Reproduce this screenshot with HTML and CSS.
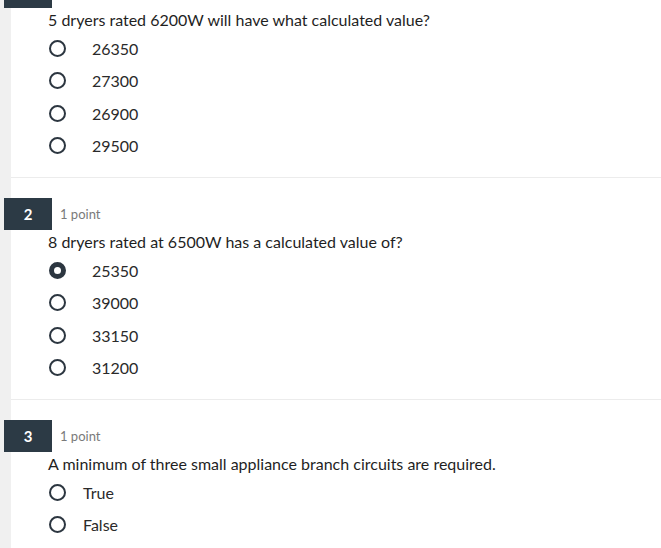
FILE: index.html
```html
<!DOCTYPE html>
<html>
<head>
<meta charset="utf-8">
<link rel="stylesheet" href="styles.css">
</head>
<body>
<div class="page">
  <div class="rail"></div>
  <main class="quiz">
    <section class="question first">
      <div class="q-head"><span class="badge">1</span><span class="points">1 point</span></div>
      <p class="q-text">5 dryers rated 6200W will have what calculated value?</p>
      <ul class="options">
        <li class="option"><span class="radio"></span><span class="opt-text num">26350</span></li>
        <li class="option"><span class="radio"></span><span class="opt-text num">27300</span></li>
        <li class="option"><span class="radio"></span><span class="opt-text num">26900</span></li>
        <li class="option"><span class="radio"></span><span class="opt-text num">29500</span></li>
      </ul>
    </section>
    <section class="question">
      <div class="q-head"><span class="badge">2</span><span class="points">1 point</span></div>
      <p class="q-text">8 dryers rated at 6500W has a calculated value of?</p>
      <ul class="options">
        <li class="option"><span class="radio checked"></span><span class="opt-text num">25350</span></li>
        <li class="option"><span class="radio"></span><span class="opt-text num">39000</span></li>
        <li class="option"><span class="radio"></span><span class="opt-text num">33150</span></li>
        <li class="option"><span class="radio"></span><span class="opt-text num">31200</span></li>
      </ul>
    </section>
    <section class="question">
      <div class="q-head"><span class="badge">3</span><span class="points">1 point</span></div>
      <p class="q-text">A minimum of three small appliance branch circuits are required.</p>
      <ul class="options">
        <li class="option"><span class="radio"></span><span class="opt-text">True</span></li>
        <li class="option"><span class="radio"></span><span class="opt-text">False</span></li>
      </ul>
    </section>
  </main>
</div>
</body>
</html>
```

FILE: styles.css
```css
html, body {
  margin: 0;
  padding: 0;
  background: #ffffff;
  font-family: Lato, "Liberation Sans", sans-serif;
  color: #1f1f1f;
  overflow: hidden;
}

.page {
  display: flex;
  min-height: 548px;
}

.rail {
  width: 11px;
  flex: 0 0 11px;
  background: #f0f0f0;
}

.quiz {
  flex: 1;
  min-width: 0;
}

.question {
  padding: 20px 0 15px 37px;
  border-bottom: 1px solid #ececec;
}

.question.first {
  margin-top: -44px;
}

.q-head {
  display: flex;
  align-items: center;
  gap: 8px;
  height: 32px;
  margin-left: -44px;
}

.badge {
  width: 48px;
  height: 32px;
  display: flex;
  align-items: center;
  justify-content: center;
  background: #2c3a45;
  color: #ffffff;
  font-size: 15px;
  font-weight: 700;
}

.points {
  font-size: 13px;
  color: #7a7a7a;
}

.q-text {
  margin: 2px 0 0;
  font-size: 16px;
  line-height: 20px;
  color: #1f1f1f;
}

.options {
  list-style: none;
  margin: 2px 0 0;
  padding: 0;
}

.option {
  display: flex;
  align-items: center;
  height: 32.5px;
}

.radio {
  box-sizing: border-box;
  width: 17px;
  height: 17px;
  margin-left: 1px;
  border: 2.5px solid #2c3640;
  border-radius: 50%;
  flex: 0 0 auto;
}

.radio.checked {
  border-width: 5.5px;
  background: #ffffff;
}

.opt-text {
  margin-left: 17px;
  font-size: 16px;
  color: #2a2a2a;
}

.opt-text.num {
  margin-left: 26px;
}
```
